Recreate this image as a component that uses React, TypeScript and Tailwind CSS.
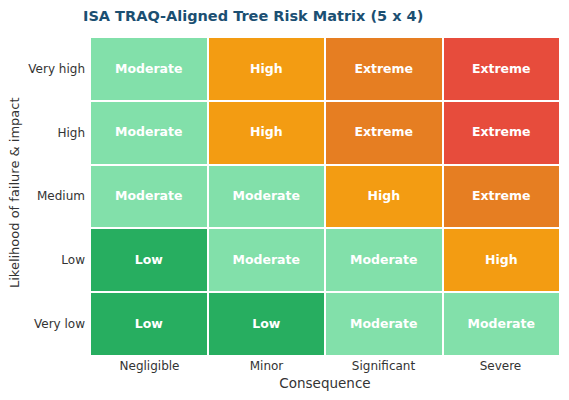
import React from "react";

const LG = "bg-[#82e0aa]";
const OR = "bg-[#f39c12]";
const DO = "bg-[#e67e22]";
const RD = "bg-[#e74c3c]";
const GR = "bg-[#27ae60]";

const rows: { label: string; cells: [string, string][] }[] = [
  { label: "Very high", cells: [["Moderate", LG], ["High", OR], ["Extreme", DO], ["Extreme", RD]] },
  { label: "High", cells: [["Moderate", LG], ["High", OR], ["Extreme", DO], ["Extreme", RD]] },
  { label: "Medium", cells: [["Moderate", LG], ["Moderate", LG], ["High", OR], ["Extreme", DO]] },
  { label: "Low", cells: [["Low", GR], ["Moderate", LG], ["Moderate", LG], ["High", OR]] },
  { label: "Very low", cells: [["Low", GR], ["Low", GR], ["Moderate", LG], ["Moderate", LG]] },
];

const cols = ["Negligible", "Minor", "Significant", "Severe"];

export default function App() {
  return (
    <div
      className="w-[569px] h-[400px] bg-white relative overflow-hidden"
      style={{ fontFamily: "'DejaVu Sans', sans-serif" }}
    >
      <div className="pl-[83px] pt-[5px] h-[38px] text-[14.5px] font-bold text-[#1b4f72] leading-[22px]">
        ISA TRAQ-Aligned Tree Risk Matrix (5 x 4)
      </div>
      <div className="flex">
        <div className="w-[28px] h-[317px] pb-[8px] flex items-center justify-center">
          <div className="-rotate-90 whitespace-nowrap text-[13px] text-[#333]">
            Likelihood of failure &amp; impact
          </div>
        </div>
        <div className="w-[57px] h-[317px] grid grid-rows-5 gap-[2px]">
          {rows.map((r) => (
            <div key={r.label} className="flex items-center justify-end text-[12px] text-[#333]">
              {r.label}
            </div>
          ))}
        </div>
        <div className="ml-[6px] w-[468px] h-[317px] grid grid-cols-4 grid-rows-5 gap-[2px]">
          {rows.map((r) =>
            r.cells.map(([t, c], i) => (
              <div
                key={r.label + i}
                className={`${c} flex items-center justify-center text-white font-bold text-[12.5px]`}
              >
                {t}
              </div>
            ))
          )}
        </div>
      </div>
      <div className="flex pl-[91px] w-[560px]">
        <div className="w-[468px] grid grid-cols-4 pt-[2px]">
          {cols.map((c) => (
            <div key={c} className="text-center text-[12px] text-[#333] leading-[18px]">
              {c}
            </div>
          ))}
        </div>
      </div>
      <div className="pl-[91px] w-[560px]">
        <div className="w-[468px] text-center text-[13.5px] text-[#333] leading-[16px]">Consequence</div>
      </div>
    </div>
  );
}
